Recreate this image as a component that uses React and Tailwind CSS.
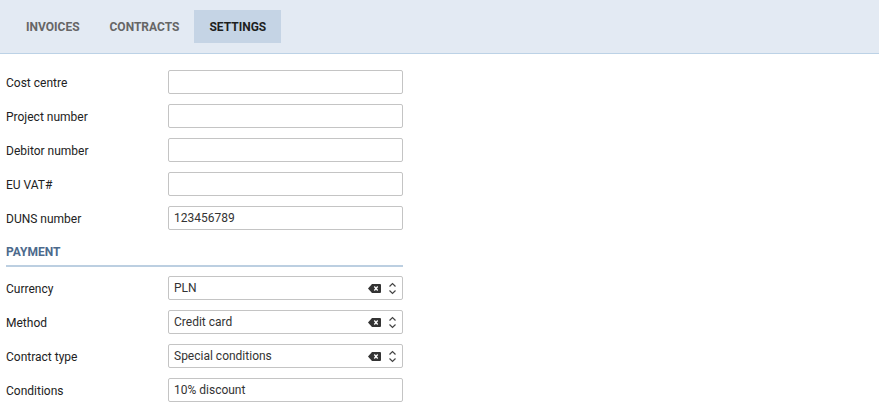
import React from "react";

const tabs = ["INVOICES", "CONTRACTS", "SETTINGS"];

function TextRow({ label, value = "" }) {
  return (
    <div className="flex items-center h-[24px]">
      <div className="w-[162px] text-[12px] text-[#222] pt-[1px]">{label}</div>
      <div className="w-[235px] h-[24px] border border-[#c4c4c4] rounded-[2px] bg-white flex items-center px-[5px] text-[12px] text-[#333]">
        {value}
      </div>
    </div>
  );
}

function ClearIcon() {
  return (
    <svg width="13" height="9" viewBox="0 0 13 9">
      <path d="M4 0H12a1 1 0 0 1 1 1V8a1 1 0 0 1-1 1H4L0 4.5Z" fill="#333" />
      <path d="M6.3 2.5l3.4 4M9.7 2.5l-3.4 4" stroke="#fff" strokeWidth="1.3" />
    </svg>
  );
}

function UpDownIcon() {
  return (
    <svg width="9" height="13" viewBox="0 0 9 13" fill="none" stroke="#444" strokeWidth="1.2">
      <path d="M1.5 4.5L4.5 1.5L7.5 4.5" />
      <path d="M1.5 8.5L4.5 11.5L7.5 8.5" />
    </svg>
  );
}

function SelectRow({ label, value }) {
  return (
    <div className="flex items-center h-[24px]">
      <div className="w-[162px] text-[12px] text-[#222] pt-[1px]">{label}</div>
      <div className="w-[235px] h-[24px] border border-[#c4c4c4] rounded-[2px] bg-white flex items-center pl-[5px] pr-[5px] text-[12px] text-[#333]">
        <span className="flex-1">{value}</span>
        <span className="flex items-center gap-[7px]">
          <ClearIcon />
          <UpDownIcon />
        </span>
      </div>
    </div>
  );
}

export default function App() {
  return (
    <div className="w-[879px] h-[412px] bg-white font-['Roboto',sans-serif]">
      <div className="h-[54px] bg-[#e3eaf3] border-b border-[#bcd2e6] flex items-start pl-[11px] pt-[10px]">
        {tabs.map((t) => (
          <div
            key={t}
            className={
              "h-[33px] px-[15px] flex items-center text-[12px] font-bold " +
              (t === "SETTINGS" ? "bg-[#c5d4e5] text-[#1e1e1e]" : "text-[#666]")
            }
          >
            {t}
          </div>
        ))}
      </div>
      <div className="pl-[6px] pt-[16px] flex flex-col gap-[10px]">
        <TextRow label="Cost centre" />
        <TextRow label="Project number" />
        <TextRow label="Debitor number" />
        <TextRow label="EU VAT#" />
        <TextRow label="DUNS number" value="123456789" />
      </div>
      <div className="pl-[6px] mt-[13px]">
        <div className="w-[397px] border-b-2 border-[#bccfe1] pb-[4px] text-[12px] font-bold text-[#4c6a8c]">
          PAYMENT
        </div>
      </div>
      <div className="pl-[6px] pt-[9px] flex flex-col gap-[10px]">
        <SelectRow label="Currency" value="PLN" />
        <SelectRow label="Method" value="Credit card" />
        <SelectRow label="Contract type" value="Special conditions" />
        <TextRow label="Conditions" value="10% discount" />
      </div>
    </div>
  );
}
